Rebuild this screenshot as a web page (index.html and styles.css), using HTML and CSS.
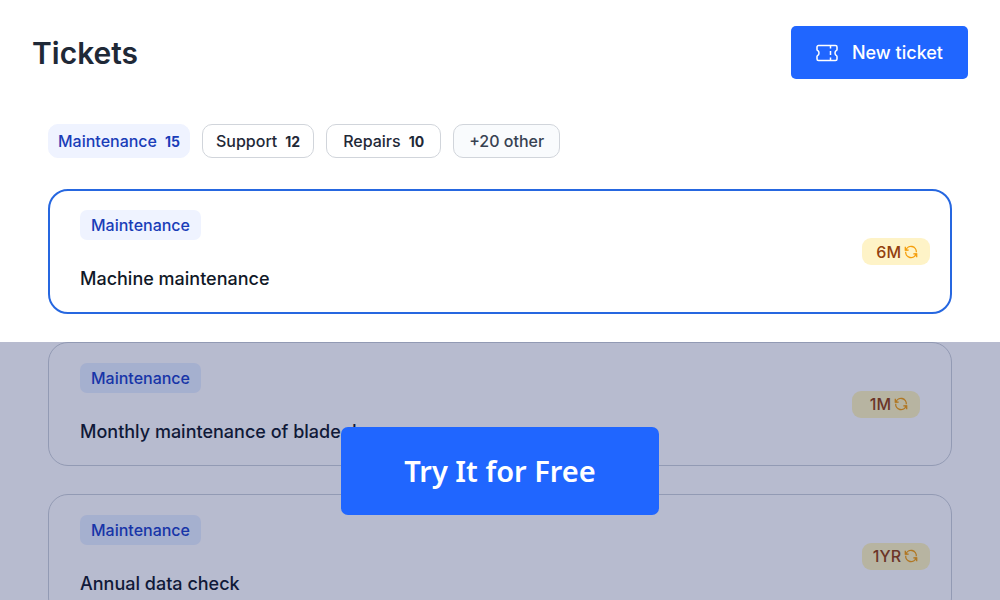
FILE: index.html
```html
<!DOCTYPE html>
<html lang="en">
<head>
    <meta charset="UTF-8">
    <meta name="viewport" content="width=device-width, initial-scale=1.0">
    <title>Tickets</title>
    <link rel="stylesheet" href="styles.css">
</head>
<body>
    <!-- Shared icon -->
    <svg class="sprite" aria-hidden="true">
        <symbol id="icon-repeat" viewBox="0 0 14 14">
            <path d="M2 5A5.300 5.300 0 0 1 12.300 7.200M12 9A5.300 5.300 0 0 1 1.700 6.800" />
            <path d="M1.300 1.800v3.400h3.400M12.700 12.200V8.800H9.300" />
            <path class="fill" d="M1 2.500v3h3zM13 11.500v-3h-3z" />
        </symbol>
    </svg>

    <header class="header">
        <h1>Tickets</h1>
        <button class="new-ticket" type="button">
            <svg class="ticket-icon" viewBox="0 0 22 18" aria-hidden="true">
                <path d="M2.500 1.500h17a1.500 1.500 0 0 1 1.500 1.500v2.500q0 .6-.5.900a3 3 0 0 0 0 5.200q.5.300.5.900V15a1.500 1.500 0 0 1-1.500 1.500h-17A1.500 1.500 0 0 1 1 15v-2.500q0-.6.500-.9a3 3 0 0 0 0-5.200Q1 6.100 1 5.500V3a1.500 1.500 0 0 1 1.500-1.500z" />
                <path d="M14.500 1.500v3M14.500 7v4M14.500 13.500v3" />
            </svg>
            New ticket
        </button>
    </header>

    <main class="content">
        <!-- Category filters -->
        <nav class="filters">
            <button class="filter active" type="button">Maintenance <b>15</b></button>
            <button class="filter" type="button">Support <b>12</b></button>
            <button class="filter wide" type="button">Repairs <b>10</b></button>
            <button class="filter more" type="button">+20 other</button>
        </nav>

        <section class="open">
            <article class="card selected">
                <div>
                    <span class="tag">Maintenance</span>
                    <h2>Machine maintenance</h2>
                </div>
                <span class="repeat">6M <svg><use href="#icon-repeat" /></svg></span>
            </article>
        </section>

        <!-- Tickets behind the call to action -->
        <section class="locked">
            <article class="card inset">
                <div>
                    <span class="tag">Maintenance</span>
                    <h2>Monthly maintenance of blade d</h2>
                </div>
                <span class="repeat">1M <svg><use href="#icon-repeat" /></svg></span>
            </article>
            <article class="card">
                <div>
                    <span class="tag">Maintenance</span>
                    <h2>Annual data check</h2>
                </div>
                <span class="repeat">1YR <svg><use href="#icon-repeat" /></svg></span>
            </article>
            <div class="overlay">
                <a class="cta" href="#">Try It for Free</a>
            </div>
        </section>
    </main>
</body>
</html>
```
FILE: styles.css
```css
* {
    box-sizing: border-box;
}

body {
    margin: 0;
    height: 100vh;
    display: flex;
    flex-direction: column;
    overflow: hidden;
    background-color: white;
    color: #111827;
    font-family: Inter, "Liberation Sans", sans-serif;
}

button {
    font-family: inherit;
    cursor: pointer;
}

.sprite {
    display: none;
}

/* Header */
.header {
    display: flex;
    align-items: center;
    justify-content: space-between;
    padding: 26px 32px 0;
}

h1 {
    margin: 0;
    font-size: 30px;
    font-weight: 600;
    color: #1f2937;
}

.new-ticket {
    display: flex;
    align-items: center;
    gap: 14px;
    height: 53px;
    padding: 0 25px;
    border: none;
    border-radius: 5px;
    background-color: #2066ff;
    color: white;
    font-size: 18px;
    font-weight: 500;
}

.ticket-icon {
    width: 22px;
    height: 18px;
    fill: none;
    stroke: white;
    stroke-width: 1.5;
}

/* Filters */
.content {
    flex: 1;
    min-height: 0;
    display: flex;
    flex-direction: column;
    padding-top: 45px;
}

.filters {
    display: flex;
    gap: 12px;
    padding: 0 48px;
}

.filter {
    display: flex;
    align-items: center;
    gap: 8px;
    height: 34px;
    padding: 0 13px;
    border: 1px solid #d1d5db;
    border-radius: 10px;
    background-color: white;
    color: #1f2937;
    font-size: 16px;
    font-weight: 500;
}

.filter b {
    font-size: 14px;
    font-weight: 700;
}

.filter.active {
    padding: 0 9px;
    border-color: #eff3ff;
    background-color: #eff3ff;
    color: #1a3db8;
}

.filter.wide {
    padding: 0 16px;
}

.filter.more {
    padding: 0 15px;
    background-color: #f9fbfd;
    color: #374151;
}

/* Ticket cards */
.open {
    padding: 31px 48px 28px;
}

.card {
    display: flex;
    align-items: center;
    justify-content: space-between;
    height: 124px;
    flex-shrink: 0;
    padding: 0 21px 0 31px;
    border: 1px solid #d1d5db;
    border-radius: 20px;
}

.card.selected {
    height: 125px;
    padding: 0 20px 0 30px;
    border: 2px solid #2667e0;
}

.card.inset {
    padding-right: 31px;
}

.tag {
    display: inline-block;
    padding: 0 11px;
    border-radius: 7px;
    background-color: #eff3ff;
    color: #1a3db8;
    font-size: 16px;
    font-weight: 500;
    line-height: 30px;
}

h2 {
    margin: 25px 0 0;
    font-size: 18px;
    font-weight: 500;
    line-height: 28px;
}

.repeat {
    display: flex;
    align-items: center;
    justify-content: flex-end;
    gap: 3px;
    width: 68px;
    height: 27px;
    padding-right: 12px;
    border-radius: 9px;
    background-color: #fef3c7;
    color: #92400e;
    font-size: 16px;
    font-weight: 500;
}

.repeat svg {
    width: 14px;
    height: 14px;
    fill: none;
    stroke: #f59e0b;
    stroke-width: 1.3;
}

.fill {
    fill: #f59e0b;
    stroke: none;
}

/* Locked tickets */
.locked {
    position: relative;
    flex: 1;
    min-height: 0;
    display: flex;
    flex-direction: column;
    gap: 28px;
    padding: 0 48px;
    overflow: hidden;
}

.locked .card {
    border-color: #cbd0d8;
}

.locked .tag {
    background-color: #e6efff;
    color: #1a40c8;
}

.locked .repeat {
    background-color: #fff5bd;
}

.overlay {
    position: absolute;
    inset: 0;
    display: flex;
    align-items: center;
    justify-content: center;
    background-color: rgba(18, 31, 95, 0.3);
}

.cta {
    padding: 22px 63px;
    border-radius: 7px;
    background-color: #2066ff;
    color: white;
    font-family: "Noto Sans", sans-serif;
    font-size: 29px;
    font-weight: 600;
    line-height: 44px;
    text-decoration: none;
}
```
